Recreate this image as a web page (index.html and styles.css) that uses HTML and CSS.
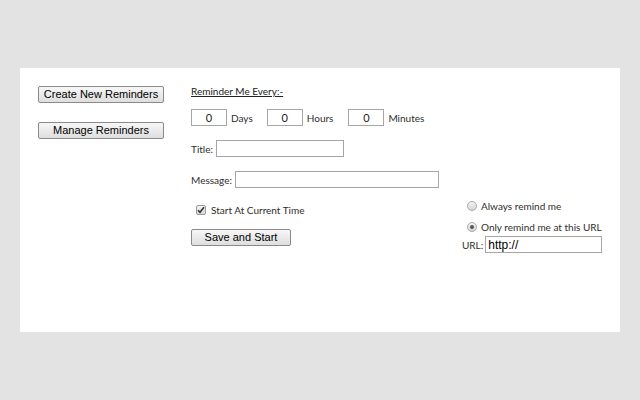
FILE: index.html
```html
<!DOCTYPE html>
<html>
<head>
<meta charset="utf-8">
<link rel="stylesheet" href="styles.css">
</head>
<body>
<div class="panel">
  <div class="side">
    <button class="btn btn-wide">Create New Reminders</button>
    <button class="btn btn-wide btn-second">Manage Reminders</button>
  </div>
  <div class="main">
    <div class="heading">Reminder Me Every:-</div>
    <div class="row row-time">
      <input class="num" type="text" value="0"><span class="unit">Days</span>
      <input class="num num-2" type="text" value="0"><span class="unit">Hours</span>
      <input class="num num-3" type="text" value="0"><span class="unit">Minutes</span>
    </div>
    <div class="row row-field">
      <span class="lbl">Title:</span><input class="txt txt-title" type="text">
    </div>
    <div class="row row-field">
      <span class="lbl">Message:</span><input class="txt txt-msg" type="text">
    </div>
    <div class="bottom">
      <div class="left-sub">
        <div class="check-row">
          <span class="check"><svg width="8" height="8" viewBox="0 0 8 8"><path d="M1 4.2 L3 6.3 L7 1.2" fill="none" stroke="#333" stroke-width="1.6"/></svg></span>
          <span class="check-lbl">Start At Current Time</span>
        </div>
        <button class="btn btn-save">Save and Start</button>
      </div>
      <div class="right-sub">
        <div class="radio-row"><span class="radio"></span><span class="radio-lbl">Always remind me</span></div>
        <div class="radio-row radio-row-2"><span class="radio radio-on"><span class="dot"></span></span><span class="radio-lbl">Only remind me at this URL</span></div>
        <div class="url-row"><span class="lbl">URL:</span><input class="txt txt-url" type="text" value="http://"></div>
      </div>
    </div>
  </div>
</div>
</body>
</html>
```
FILE: styles.css
```css
html, body {
  margin: 0;
  padding: 0;
  background: #e3e3e3;
}
body {
  font-family: Lato, "Open Sans", sans-serif;
  font-size: 10px;
  color: #2e2e2e;
}
.panel {
  margin: 68px 20px 0;
  height: 264px;
  background: #fff;
  display: flex;
  padding-right: 18px;
}
.side {
  width: 153px;
  padding: 18px 0 0 18px;
  display: flex;
  flex-direction: column;
  align-items: flex-start;
}
.btn {
  font-family: "Liberation Sans", Arial, sans-serif;
  font-size: 11px;
  color: #000;
  background: linear-gradient(#f7f7f7, #dedede);
  border: 1px solid #8a8a8a;
  border-radius: 2px;
  height: 17px;
  padding: 0;
  line-height: 15px;
  white-space: nowrap;
  box-sizing: border-box;
}
.btn-wide {
  width: 126px;
}
.btn-second {
  margin-top: 19px;
}
.main {
  flex: 1;
  padding-top: 16px;
  display: flex;
  flex-direction: column;
}
.heading {
  height: 14px;
  line-height: 14px;
  text-decoration: underline;
  color: #222;
}
.row {
  display: flex;
  align-items: center;
  height: 17px;
}
.row-time {
  margin-top: 11px;
}
.row-field {
  margin-top: 14px;
}
input {
  box-sizing: border-box;
  height: 17px;
  border: 1px solid #a6a6a6;
  margin: 0;
  padding: 0 2px;
  outline: none;
}
.num {
  width: 36px;
  text-align: center;
  font-family: Lato, sans-serif;
  font-size: 11px;
  color: #222;
}
.unit {
  margin-left: 4px;
}
.num-2 {
  margin-left: 14px;
}
.num-3 {
  margin-left: 15px;
}
.lbl {
  margin-right: 3px;
}
.txt-title {
  width: 128px;
}
.txt-msg {
  width: 204px;
}
.bottom {
  margin-top: 13px;
  display: flex;
}
.left-sub {
  display: flex;
  flex-direction: column;
  align-items: flex-start;
}
.check-row {
  display: flex;
  align-items: center;
  margin-top: 4px;
  height: 10px;
}
.check {
  width: 10px;
  height: 10px;
  box-sizing: border-box;
  margin-left: 5px;
  border: 1px solid #9a9a9a;
  border-radius: 2px;
  background: linear-gradient(#f4f4f4, #d8d8d8);
  display: flex;
  align-items: center;
  justify-content: center;
}
.check-lbl {
  margin-left: 5px;
}
.btn-save {
  width: 100px;
  margin-top: 14px;
}
.right-sub {
  margin-left: auto;
  width: 140px;
  display: flex;
  flex-direction: column;
}
.radio-row {
  display: flex;
  align-items: center;
  height: 10px;
}
.radio-row-2 {
  margin-top: 11px;
}
.radio {
  width: 10px;
  height: 10px;
  box-sizing: border-box;
  margin-left: 5px;
  border: 1px solid #a8a8a8;
  border-radius: 50%;
  background: linear-gradient(#f6f6f6, #d4d4d4);
  display: flex;
  align-items: center;
  justify-content: center;
}
.dot {
  width: 4px;
  height: 4px;
  border-radius: 50%;
  background: #555;
}
.radio-lbl {
  margin-left: 4px;
  white-space: nowrap;
}
.url-row {
  display: flex;
  align-items: center;
  margin-top: 4px;
  height: 17px;
}
.url-row .lbl {
  margin-right: 2px;
}
.txt-url {
  flex: 1;
  min-width: 0;
  font-family: "Liberation Sans", Arial, sans-serif;
  font-size: 12px;
  color: #000;
}
```
